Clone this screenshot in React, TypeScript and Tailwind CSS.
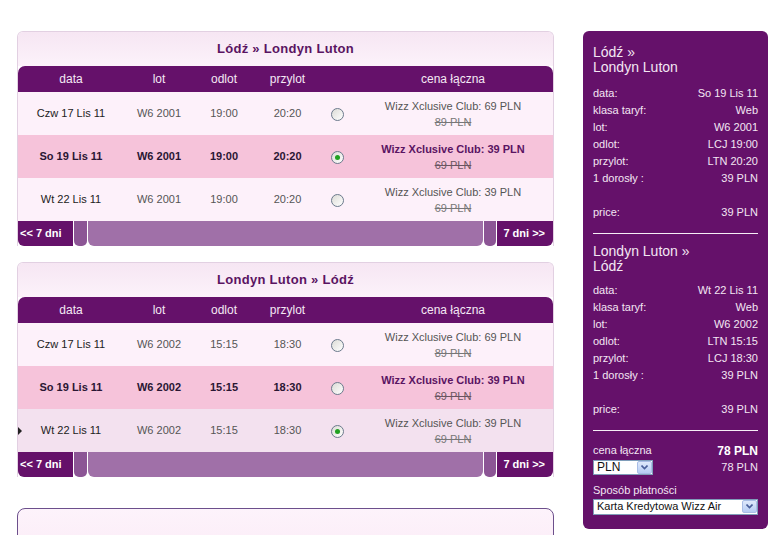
import React from 'react';

type Flight = {
  date: string;
  lot: string;
  dep: string;
  arr: string;
  price: string;
  old: string;
  selected?: boolean;
  checked?: boolean;
  hover?: boolean;
};

const outbound: Flight[] = [
  { date: 'Czw 17 Lis 11', lot: 'W6 2001', dep: '19:00', arr: '20:20', price: '69 PLN', old: '89 PLN' },
  { date: 'So 19 Lis 11', lot: 'W6 2001', dep: '19:00', arr: '20:20', price: '39 PLN', old: '69 PLN', selected: true, checked: true },
  { date: 'Wt 22 Lis 11', lot: 'W6 2001', dep: '19:00', arr: '20:20', price: '39 PLN', old: '69 PLN' },
];

const inbound: Flight[] = [
  { date: 'Czw 17 Lis 11', lot: 'W6 2002', dep: '15:15', arr: '18:30', price: '69 PLN', old: '89 PLN' },
  { date: 'So 19 Lis 11', lot: 'W6 2002', dep: '15:15', arr: '18:30', price: '39 PLN', old: '69 PLN', selected: true },
  { date: 'Wt 22 Lis 11', lot: 'W6 2002', dep: '15:15', arr: '18:30', price: '39 PLN', old: '69 PLN', checked: true, hover: true },
];

const cols = 'grid grid-cols-[106px_70px_60px_67px_32px_1fr]';

const Radio: React.FC<{ checked?: boolean }> = ({ checked }) => (
  <div className="w-[13px] h-[13px] rounded-full border border-[#6b7a8c] bg-gradient-to-br from-[#dcdcd6] to-white flex items-center justify-center">
    {checked && <div className="w-[5px] h-[5px] rounded-full bg-[#21a121]" />}
  </div>
);

const FlightCard: React.FC<{ title: string; rows: Flight[] }> = ({ title, rows }) => (
  <div className="w-[537px] rounded-t-[6px] border-x border-t border-[#e2d0e2] overflow-hidden">
    <div className="h-[34px] flex items-center justify-center bg-gradient-to-b from-[#f6e6f3] to-[#fcf2fa] text-[13px] tracking-[0.3px] font-bold text-[#5a1462]">
      {title}
    </div>
    <div className={`${cols} h-[26px] items-center bg-[#65116a] rounded-t-[7px] text-[12px] text-[#f4e8f4] text-center`}>
      <div>data</div>
      <div>lot</div>
      <div>odlot</div>
      <div>przylot</div>
      <div />
      <div>cena łączna</div>
    </div>
    {rows.map((r, i) => {
      const bg = r.selected ? 'bg-[#f6c3da]' : r.hover ? 'bg-[#f3e1ef]' : 'bg-[#fdf1fa]';
      const strong = r.selected ? 'font-bold text-[#2a1633]' : 'text-[#555]';
      return (
        <div key={i} className={`${cols} relative h-[43px] items-center text-center text-[11px] ${bg}`}>
          {r.hover && (
            <div className="absolute left-0 top-[18px] w-0 h-0 border-y-[4px] border-y-transparent border-l-[4px] border-l-[#222]" />
          )}
          <div className={r.selected ? 'font-bold text-[#2a1633]' : 'text-[#222]'}>{r.date}</div>
          <div className={strong}>{r.lot}</div>
          <div className={strong}>{r.dep}</div>
          <div className={strong}>{r.arr}</div>
          <div className="flex justify-center pt-[1px]">
            <Radio checked={r.checked} />
          </div>
          <div className="flex flex-col items-center leading-[16px]">
            <span className={r.selected ? 'font-bold text-[#5a1462]' : 'text-[#555]'}>
              Wizz Xclusive Club: {r.price}
            </span>
            <span className={`line-through ${r.selected ? 'text-[#6a5560]' : 'text-[#777]'}`}>{r.old}</span>
          </div>
        </div>
      );
    })}
    <div className="flex h-[25px] text-[11px] font-bold text-white">
      <div className="w-[55px] bg-[#65116a] rounded-bl-[6px] flex items-center pl-[2px]">&lt;&lt; 7 dni</div>
      <div className="w-[13px] bg-[#8c5595] rounded-b-[5px] ml-[1px]" />
      <div className="flex-1 bg-[#a070a8] rounded-b-[6px] ml-[1px]" />
      <div className="w-[12px] bg-[#8c5595] rounded-b-[5px] ml-[1px]" />
      <div className="w-[56px] bg-[#65116a] rounded-br-[6px] flex items-center justify-end pr-[8px] ml-[1px]">7 dni &gt;&gt;</div>
    </div>
  </div>
);

const Line: React.FC<{ k: string; v: string }> = ({ k, v }) => (
  <div className="flex justify-between h-[17px] items-center">
    <span>{k}</span>
    <span>{v}</span>
  </div>
);

const Arrow: React.FC = () => (
  <div className="w-[15px] h-[13px] bg-gradient-to-b from-[#dfe9fb] to-[#b6ccf4] border border-[#a9bde6] rounded-[2px] flex items-center justify-center">
    <svg width="7" height="5" viewBox="0 0 7 5">
      <path d="M0.5 0.5 L3.5 3.5 L6.5 0.5" stroke="#4a5f9a" strokeWidth="1.6" fill="none" />
    </svg>
  </div>
);

const Summary: React.FC = () => (
  <div className="w-[185px] h-[498px] bg-[#65116a] rounded-[6px] px-[10px] pt-[14px] text-[11px] text-[#f3e6f3]">
    <div className="text-[14px] leading-[15px]">
      <div>Lódź »</div>
      <div>Londyn Luton</div>
    </div>
    <div className="mt-[10px]">
      <Line k="data:" v="So 19 Lis 11" />
      <Line k="klasa taryf:" v="Web" />
      <Line k="lot:" v="W6 2001" />
      <Line k="odlot:" v="LCJ 19:00" />
      <Line k="przylot:" v="LTN 20:20" />
      <Line k="1 dorosły :" v="39 PLN" />
      <div className="h-[17px]" />
      <Line k="price:" v="39 PLN" />
    </div>
    <div className="h-px bg-[#f6eef6] mt-[12px]" />
    <div className="text-[14px] leading-[15px] mt-[10px]">
      <div>Londyn Luton »</div>
      <div>Lódź</div>
    </div>
    <div className="mt-[8px]">
      <Line k="data:" v="Wt 22 Lis 11" />
      <Line k="klasa taryf:" v="Web" />
      <Line k="lot:" v="W6 2002" />
      <Line k="odlot:" v="LTN 15:15" />
      <Line k="przylot:" v="LCJ 18:30" />
      <Line k="1 dorosły :" v="39 PLN" />
      <div className="h-[17px]" />
      <Line k="price:" v="39 PLN" />
    </div>
    <div className="h-px bg-[#f6eef6] mt-[12px]" />
    <div className="mt-[11px] flex justify-between h-[17px] items-center">
      <span>cena łączna</span>
      <span className="font-bold text-white text-[12px]">78 PLN</span>
    </div>
    <div className="flex justify-between items-center">
      <div className="w-[60px] h-[15px] bg-white border border-[#7f9db9] flex items-center justify-between pl-[3px] text-[12px] text-[#111]">
        <span>PLN</span>
        <Arrow />
      </div>
      <span>78 PLN</span>
    </div>
    <div className="mt-[6px] h-[17px] flex items-center">Sposób płatności</div>
    <div className="w-[165px] h-[16px] bg-white border border-[#7f9db9] flex items-center justify-between pl-[3px] text-[11px] text-[#111]">
      <span>Karta Kredytowa Wizz Air</span>
      <Arrow />
    </div>
  </div>
);

export default function App() {
  return (
    <div className="w-[774px] h-[535px] overflow-hidden bg-white font-['Liberation_Sans',Arial,sans-serif]">
      <div className="flex pt-[31px] pl-[17px] gap-[29px]">
        <div className="flex flex-col">
          <FlightCard title="Lódź » Londyn Luton" rows={outbound} />
          <div className="mt-[16px]">
            <FlightCard title="Londyn Luton » Lódź" rows={inbound} />
          </div>
          <div className="mt-[31px] w-[537px] h-[60px] rounded-[8px] border border-[#6c4f8c] bg-gradient-to-b from-[#fdf3fb] to-[#fbeaf6]" />
        </div>
        <Summary />
      </div>
    </div>
  );
}
